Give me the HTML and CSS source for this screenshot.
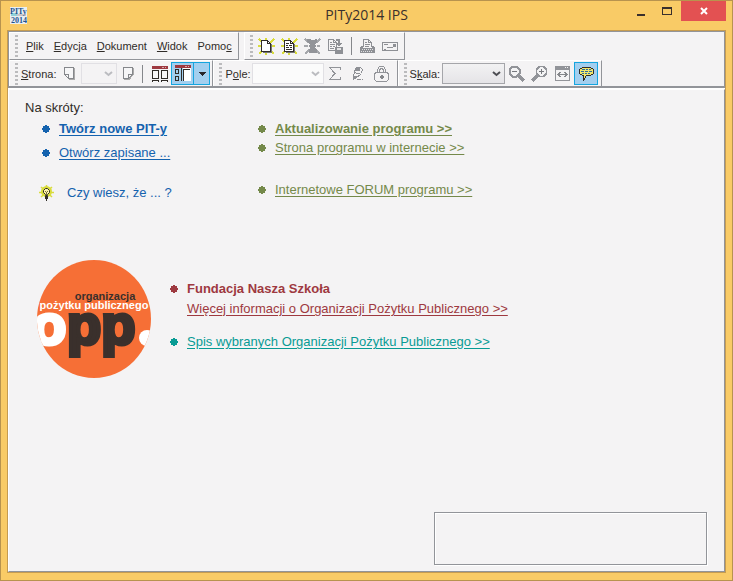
FILE: index.html
```html
<!DOCTYPE html>
<html lang="pl">
<head>
<meta charset="utf-8">
<meta name="viewport" content="width=device-width, initial-scale=1">
<title>PITy2014 IPS</title>
<link rel="stylesheet" href="styles.css">
</head>
<body>
<div class="window">
  <header class="titlebar">
    <svg class="app-icon" width="17" height="17" viewBox="0 0 17 17" aria-hidden="true">
      <rect width="17" height="17" fill="#e9eef0"/>
      <path d="M1 6h6v3H1z" fill="#8fd0d8"/><path d="M7 7h9v2H7z" fill="#c9c4c8"/>
      <text x="0" y="7" class="app-text">PITy</text>
      <text x="1" y="16" class="app-text">2014</text>
    </svg>
    <h1 class="title">PITy2014 IPS</h1>
    <div class="controls">
      <button class="control" type="button" aria-label="Minimalizuj"><svg width="8" height="12" viewBox="0 0 8 12"><path d="M0 9h8v2H0z" fill="#3a302c"/></svg></button>
      <button class="control" type="button" aria-label="Maksymalizuj"><svg width="10" height="12" viewBox="0 0 10 12"><path d="M0 2h10v8H0zM1 4v5h8V4z" fill="#3a302c" fill-rule="evenodd"/></svg></button>
      <button class="control close" type="button" aria-label="Zamknij"><svg width="8" height="8" viewBox="0 0 8 8"><path d="M1 1l6 6M7 1l-6 6" stroke="#fff" stroke-width="2"/></svg></button>
    </div>
  </header>

  <div class="client">
    <div class="toolbars">
      <div class="row">
        <nav class="band menu" aria-label="Menu">
          <span class="grip"></span>
          <button type="button"><u>P</u>lik</button>
          <button type="button"><u>E</u>dycja</button>
          <button type="button"><u>D</u>okument</button>
          <button type="button"><u>W</u>idok</button>
          <button type="button">Pomo<u>c</u></button>
        </nav>
        <div class="band files">
          <span class="grip"></span>
          <button class="tool" type="button" aria-label="Nowy"><svg width="17" height="17" viewBox="0 0 17 17">
            <path d="M1 1l15 15M16 1L1 16M0 8h17M8 0v17" stroke="#d9dc3c" stroke-width="1.5"/>
            <path d="M5 15V14h8V6h1v9z" fill="#777"/><path d="M3.500 2.500h6l3 3v8h-9z" fill="#fff" stroke="#302c28"/><path d="M9.500 2.500v3h3" fill="none" stroke="#302c28"/></svg></button>
          <button class="tool" type="button" aria-label="Otwórz"><svg width="17" height="17" viewBox="0 0 17 17">
            <path d="M1 1l15 15M16 1L1 16M0 8h17M8 0v17" stroke="#d9dc3c" stroke-width="1.500"/>
            <path d="M5 15V14h8V6h1v9z" fill="#777"/><path d="M3.500 2.500h6l3 3v8h-9z" fill="#fff" stroke="#302c28"/><path d="M9.500 2.500v3h3M5 5.500h3M5 7.500h2m1 0h3M5 9.500h3m1 0h2M5 11.500h6" fill="none" stroke="#302c28"/></svg></button>
          <button class="tool" type="button" aria-label="Formularz"><svg width="17" height="17" viewBox="0 0 17 17">
            <path d="M1 1l4 4M16 1l-4 4M1 16l4-4M16 16l-4-4M0 8h4M13 8h3" stroke="#a5a7ab" stroke-width="1.5"/>
            <path d="M3 1h3l2 1 5-1v4l-2 1 1 2-1 2 2 2v3H5v-3l1-2-1-2 1-2-3-2z" fill="#929499"/></svg></button>
          <button class="tool" type="button" aria-label="Zapisz"><svg width="17" height="17" viewBox="0 0 17 17">
            <path d="M1.500 1.500h5l3 3v8h-8zM6.500 1.500v3h3M3 4.500h2M3 6.500h5M3 8.500h2m1 0h2M3 10.500h4" fill="none" stroke="#8e9095"/>
            <path d="M9 1h4v4h2l-3 4-3-4h2V3H9zM8 9h8v7H8z" fill="#8e9095"/><path d="M10 10h4v2h-4z" fill="#e5e5e6"/></svg></button>
          <span class="divider"></span>
          <button class="tool print" type="button" aria-label="Drukuj"><svg width="17" height="17" viewBox="0 0 17 17">
            <path d="M4.500 9V1.500h5l3 3V9M9.500 1.500v3h3M6 4.500h2M6 6.500h5M6 8.500h4" fill="none" stroke="#8e9095"/>
            <path d="M2 8h2v2h9V8h2l1 2v5H1v-5z" fill="#8e9095"/><path d="M3 11.500h12M2 13.500h12" stroke="#e0e0e2" stroke-dasharray="1 1"/></svg></button>
          <button class="tool" type="button" aria-label="Wyślij"><svg width="17" height="17" viewBox="0 0 17 17">
            <path d="M.5 4.500h15v8H.5zM2 6.500h4M5 9.500h6M2 11.500h2" fill="none" stroke="#8e9095"/><path d="M11 6h3v3h-3z" fill="#8e9095"/></svg></button>
        </div>
      </div>

      <div class="row">
        <div class="band pages">
          <span class="grip"></span>
          <label for="page"><u>S</u>trona:</label>
          <button class="page-button" type="button" aria-label="Poprzednia strona"><svg width="13" height="15" viewBox="0 0 13 15"><path d="M1.500 1.500h9v11h-5l-4-4zM1.500 8.500h4v4" fill="#f6f6f7" stroke="#85878b"/><path d="M11.500 2v11.500H6" fill="none" stroke="#aaa"/></svg></button>
          <span class="combo disabled page-combo"><select id="page" disabled><option></option></select><svg width="9" height="6" viewBox="0 0 9 6"><path d="M1 1l3.500 3L8 1" fill="none" stroke="#bbbcc0" stroke-width="2"/></svg></span>
          <button class="page-button" type="button" aria-label="Następna strona"><svg width="13" height="15" viewBox="0 0 13 15"><path d="M1.500 1.500h9v7l-4 4h-5zM10.500 8.500h-4v4" fill="#f6f6f7" stroke="#85878b"/><path d="M2 13.500h5l4.500-5V2" fill="none" stroke="#aaa"/></svg></button>
          <span class="divider"></span>
          <button class="layout" type="button" aria-label="Dwie strony"><svg width="16" height="16" viewBox="0 0 16 16"><path d="M0 0h16v3H0z" fill="#9e3940"/><path d="M10 1h2v1h-2zM13 1h1v1h-1z" fill="#d6a9aa"/><path d="M.5 4.500h6v8h-6zM9.500 4.500h6v8h-6zM.5 16v-1.500h6V16M9.500 16v-1.500h6V16" fill="#f8f8f8" stroke="#302c28"/></svg></button>
          <button class="active split" type="button" aria-label="Panel stron"><svg width="16" height="17" viewBox="0 0 16 17"><path d="M8 3h8v13H8z" fill="#fff"/><path d="M0 0h16v3H0z" fill="#9e3940"/><path d="M10 1h2v1h-2zM13 1h1v1h-1z" fill="#d6a9aa"/><path d="M.5 4.500h3v4h-3zM.5 11.500h3v4h-3zM6.500 3v13M8.500 16V4.500H15" fill="none" stroke="#302c28"/></svg></button>
          <button class="active arrow" type="button" aria-label="Wybierz układ"><svg width="8" height="4" viewBox="0 0 8 4"><path d="M0 0h8L4 4z" fill="#28252a"/></svg></button>
        </div>
        <div class="band fields">
          <span class="grip"></span>
          <label for="field">P<u>o</u>le:</label>
          <span class="combo disabled field-combo"><select id="field" disabled><option></option></select><svg width="9" height="6" viewBox="0 0 9 6"><path d="M1 1l3.500 3L8 1" fill="none" stroke="#bbbcc0" stroke-width="2"/></svg></span>
          <button class="tool" type="button" aria-label="Suma"><svg width="14" height="15" viewBox="0 0 14 15"><path d="M12.500 4V1.500h-11L7 7.500l-5.500 6h11V11" fill="none" stroke="#929499"/></svg></button>
          <button class="tool" type="button" aria-label="Edytuj pole"><svg width="14" height="15" viewBox="0 0 14 15"><path d="M3.500 5.500l2-4h4l2 2-1 4-6 5h-1l-1-1zM3.500 5.500l2 2h3" fill="none" stroke="#8e9095"/><path d="M6 1h3v4H5zM2 10h4l-3 4H2z" fill="#8e9095"/><path d="M6 13.500h4m1 0h1" stroke="#8e9095"/></svg></button>
          <button class="tool" type="button" aria-label="Zablokuj"><svg width="17" height="17" viewBox="0 0 17 17"><path d="M4.500 8V4.500l2-3h4l2 3V8M6.500 8V5.500l1-2h2l1 2V8M2.500 7.500h12l1 2v5l-2 2h-10l-2-2v-5z" fill="none" stroke="#929499"/><path d="M8 10h2v4H8zM7 11h4v2H7z" fill="#85878b"/></svg></button>
        </div>
        <div class="band scale">
          <span class="grip"></span>
          <label for="scale">S<u>k</u>ala:</label>
          <span class="combo scale-combo"><select id="scale"><option></option></select><svg width="9" height="6" viewBox="0 0 9 6"><path d="M1 1l3.500 3L8 1" fill="none" stroke="#4c4d52" stroke-width="2"/></svg></span>
          <button class="tool" type="button" aria-label="Pomniejsz"><svg width="17" height="17" viewBox="0 0 17 17"><path d="M4.500 1.500h4l3 3v4l-3 3h-4l-3-3v-4z" fill="#f3f3f4" stroke="#929499" stroke-width="2"/><path d="M4 6.500h5" stroke="#77797e"/><path d="M10 10l6 6" stroke="#929499" stroke-width="3"/></svg></button>
          <button class="tool" type="button" aria-label="Powiększ"><svg width="17" height="17" viewBox="0 0 17 17"><path d="M8.500 1.500h4l3 3v4l-3 3h-4l-3-3v-4z" fill="#f3f3f4" stroke="#929499" stroke-width="1.500"/><path d="M8 6.500h5M10.500 4v5" stroke="#77797e"/><path d="M7 10l-6 6" stroke="#929499" stroke-width="3"/></svg></button>
          <button class="tool" type="button" aria-label="Dopasuj szerokość"><svg width="15" height="17" viewBox="0 0 15 17"><path d="M0 1h15v15H0zM1 5v10h13V5zM10 2h1v1h-1zM12 2h1v1h-1z" fill="#929499" fill-rule="evenodd"/><path d="M3 9.500h9M5.500 7l-2.500 2.500L5.500 12M9.500 7l2.500 2.500L9.500 12" fill="none" stroke="#85878b"/></svg></button>
          <button class="active hint" type="button" aria-label="Podpowiedzi"><svg width="17" height="16" viewBox="0 0 17 16"><path d="M4.500 1.500h8l3 2v4l-3 2h-4l-3 5v-5h-1l-3-2v-4z" fill="#f1e66c" stroke="#302c28"/><path d="M4 3.500h3m1 0h2m1 0h2M3 5.500h3m1 0h3m1 0h3M4 7.500h2m1 0h2m1 0h2" stroke="#2d6c9e"/></svg></button>
        </div>
      </div>
    </div>

    <main class="page">
      <h2 class="heading">Na skróty:</h2>
      <div class="shortcuts">
        <ul class="list left">
          <li><svg class="dot" width="8" height="8" viewBox="0 0 8 8"><path d="M3 0h2v1h2v2h1v2H7v2H5v1H3V7H1V5H0V3h1V1h2z"/></svg><a class="strong" href="#new">Twórz nowe PIT-y</a></li>
          <li><svg class="dot" width="8" height="8" viewBox="0 0 8 8"><path d="M3 0h2v1h2v2h1v2H7v2H5v1H3V7H1V5H0V3h1V1h2z"/></svg><a href="#saved">Otwórz zapisane ...</a></li>
          <li class="tip"><svg class="bulb" width="15" height="16" viewBox="0 0 15 16"><path d="M2 2l11 10M13 2L2 12M0 7.500h15M7.500 0v10" stroke="#d9dc3c" stroke-width="1.500"/><circle cx="7.500" cy="6.500" r="5.500" fill="#d9dc3c"/><path d="M6.500 10.500v-1l-2-2v-2l2-2h2l2 2v2l-2 2v1z" fill="#fff4aa" stroke="#302c28"/><path d="M6 11h3v3H8v2H7v-2H6z" fill="#302c28"/><path d="M6 6l1.500 1.500L9 6M7.500 7v3" stroke="#77703a" fill="none"/></svg><a class="plain" href="#tip">Czy wiesz, że ... ?</a></li>
        </ul>
        <ul class="list right">
          <li><svg class="dot" width="8" height="8" viewBox="0 0 8 8"><path d="M3 0h2v1h2v2h1v2H7v2H5v1H3V7H1V5H0V3h1V1h2z"/></svg><a class="strong" href="#update">Aktualizowanie programu &gt;&gt;</a></li>
          <li><svg class="dot" width="8" height="8" viewBox="0 0 8 8"><path d="M3 0h2v1h2v2h1v2H7v2H5v1H3V7H1V5H0V3h1V1h2z"/></svg><a href="#site">Strona programu w internecie &gt;&gt;</a></li>
          <li class="forum"><svg class="dot" width="8" height="8" viewBox="0 0 8 8"><path d="M3 0h2v1h2v2h1v2H7v2H5v1H3V7H1V5H0V3h1V1h2z"/></svg><a href="#forum">Internetowe FORUM programu &gt;&gt;</a></li>
        </ul>
      </div>

      <section class="opp">
        <svg class="logo" width="118" height="120" viewBox="0 0 118 120" role="img" aria-label="organizacja pożytku publicznego opp.">
          <defs><clipPath id="disc"><ellipse cx="59" cy="60" rx="57" ry="59"/></clipPath></defs>
          <g clip-path="url(#disc)">
            <rect width="118" height="120" fill="#f66f36"/>
            <text class="logo-small dark" x="70" y="41" text-anchor="middle">organizacja</text>
            <text class="logo-small light" x="59" y="50" text-anchor="middle">pożytku publicznego</text>
            <text class="logo-big light" x="-3" y="85">o</text>
            <text class="logo-big dark" x="32" y="85">pp</text>
            <circle cx="112" cy="79" r="8" fill="#fff"/>
          </g>
        </svg>
        <ul class="list info">
          <li class="red"><svg class="dot" width="8" height="8" viewBox="0 0 8 8"><path d="M3 0h2v1h2v2h1v2H7v2H5v1H3V7H1V5H0V3h1V1h2z"/></svg><strong>Fundacja Nasza Szkoła</strong></li>
          <li class="red more"><a href="#more">Więcej informacji o Organizacji Pożytku Publicznego &gt;&gt;</a></li>
          <li class="teal"><svg class="dot" width="8" height="8" viewBox="0 0 8 8"><path d="M3 0h2v1h2v2h1v2H7v2H5v1H3V7H1V5H0V3h1V1h2z"/></svg><a href="#list">Spis wybranych Organizacji Pożytku Publicznego &gt;&gt;</a></li>
        </ul>
      </section>
      <div class="message-box"></div>
    </main>
  </div>
</div>
</body>
</html>
```

FILE: styles.css
```css
* { box-sizing: border-box; }

body {
  margin: 0;
  font: 13px/16px "Liberation Sans", Arial, sans-serif;
  color: #302c28;
}

button {
  margin: 0;
  padding: 0;
  border: 0;
  background: none;
  color: inherit;
  font: inherit;
}

svg { display: block; flex: none; }

.window {
  display: flex;
  flex-direction: column;
  min-height: 100vh;
  padding: 0 6px 7px 6px;
  border: 1px solid #b8934e;
  background: #f9cb66;
}

.titlebar {
  display: grid;
  grid-template-columns: 92px 1fr 92px;
  align-items: start;
  height: 29px;
}

.app-icon { margin: 6px 0 0 3px; }

.app-text {
  font: bold 8px "Liberation Serif", serif;
  fill: #1f5590;
}

.title {
  margin: 0;
  font: 14px/28px "Open Sans", "Noto Sans", sans-serif;
  text-align: center;
  color: #3a302c;
}

.controls {
  display: grid;
  grid-template-columns: 23px 29px 45px;
  justify-content: end;
}

.control {
  display: flex;
  align-items: center;
  justify-content: center;
  height: 20px;
}

.close { background: #e35152; }

.client {
  display: flex;
  flex-direction: column;
  flex: 1;
  border: 1px solid #c59b50;
  background: #fff;
}

.toolbars {
  border: 1px solid #929499;
  border-bottom-width: 2px;
  background: #f4f3f4;
  font-size: 11px;
}

.toolbars svg { shape-rendering: crispEdges; }

.row {
  display: flex;
  height: 28px;
}

.row + .row { height: 26px; }

.band {
  display: flex;
  align-items: center;
  padding-left: 5px;
  border: 1px solid #929499;
  border-top-color: #fff;
  border-left-color: #fff;
}

.row + .row .band { border-bottom-width: 0; }

.grip {
  width: 3px;
  height: 22px;
  background: repeating-linear-gradient(#bbbbbd 0 2px, transparent 2px 4px);
}

.menu { gap: 10px; padding-right: 6px; }
.menu .grip { margin-right: -2px; }
.files { margin-left: 5px; padding-right: 2px; }
.files .tool { width: 23px; }
.files .grip { margin-right: 2px; }

.tool,
.layout,
.active,
.page-button {
  display: flex;
  align-items: center;
  justify-content: center;
}

.divider {
  width: 1px;
  height: 18px;
  margin: 0 4px;
  background: #85878b;
}

.combo {
  position: relative;
  display: flex;
  height: 21px;
}

.combo select {
  width: 100%;
  border: 1px solid #a5a6aa;
  border-radius: 0;
  background: linear-gradient(#f2f2f3, #e5e4e7);
  appearance: none;
}

.combo.disabled select {
  border-color: #d9d9de;
  background: #f4f3f4;
}

.combo.field-combo select { background: #fff; }

.combo svg {
  position: absolute;
  top: 8px;
  right: 4px;
  shape-rendering: auto;
}

.page-combo { width: 36px; margin: 0 5px; }
.field-combo { width: 72px; margin-left: 1px; }
.scale-combo { width: 63px; margin-left: 2px; }

.pages { padding-right: 2px; }
.pages label { margin: 0 7px 0 3px; }
.pages .divider { margin: 0 9px 0 7px; }
.fields label, .scale label { margin-left: 3px; }
.fields .tool, .scale .tool { width: 23px; }
.fields { padding-right: 4px; }
.scale { padding-right: 3px; }

.active {
  height: 23px;
  border: 1px solid #15a5df;
  background: #a3cfef;
}

.split { width: 23px; margin-left: 3px; }
.arrow { width: 16px; border-left: 0; }
.hint { width: 24px; }

.page {
  display: flex;
  flex: 1;
  flex-direction: column;
  margin-top: 1px;
  padding: 10px 17px 6px 16px;
  border: 1px solid #929499;
  border-top-color: #fff;
  border-left-color: #fff;
  background: #f4f3f4;
}

.heading {
  margin: 0;
  font: inherit;
}

.shortcuts {
  display: grid;
  grid-template-columns: 216px 1fr;
  padding: 5px 0 0 17px;
}

.list {
  margin: 0;
  padding: 0;
  list-style: none;
}

.list li {
  display: flex;
  align-items: center;
  gap: 9px;
}

.list a { color: inherit; text-underline-offset: 2px; }
.dot { fill: currentColor; }
.strong { font-weight: bold; }
.list .plain { text-decoration: none; }

.left { color: #1462ae; }
.left li + li { margin-top: 8px; }
.left .tip { gap: 13px; margin-left: -3px; }
.left li + .tip { margin-top: 24px; }

.right { color: #74894a; }
.right li + li { margin-top: 3px; }
.right li + .forum { margin-top: 26px; }

.opp {
  display: flex;
  gap: 17px;
  margin-top: 58px;
  padding-left: 10px;
}

.info { padding-top: 22px; }
.red { color: #9e3940; }
.teal { color: #089b94; }
.info .more { padding: 4px 0 17px 17px; }

.logo-small { font: bold 11px "Liberation Sans", Arial, sans-serif; }
.logo-big { font: bold 56px "Liberation Sans", Arial, sans-serif; stroke-width: 4px; }
.dark { fill: #3a302c; stroke: #3a302c; }
.light { fill: #fff; stroke: #fff; }
.logo-small { stroke-width: 0; }

.message-box {
  width: 273px;
  height: 53px;
  margin: auto 0 0 auto;
  border: 1px solid #929499;
  box-shadow: inset 1px 1px #fff, 1px 1px #fff;
}
```
